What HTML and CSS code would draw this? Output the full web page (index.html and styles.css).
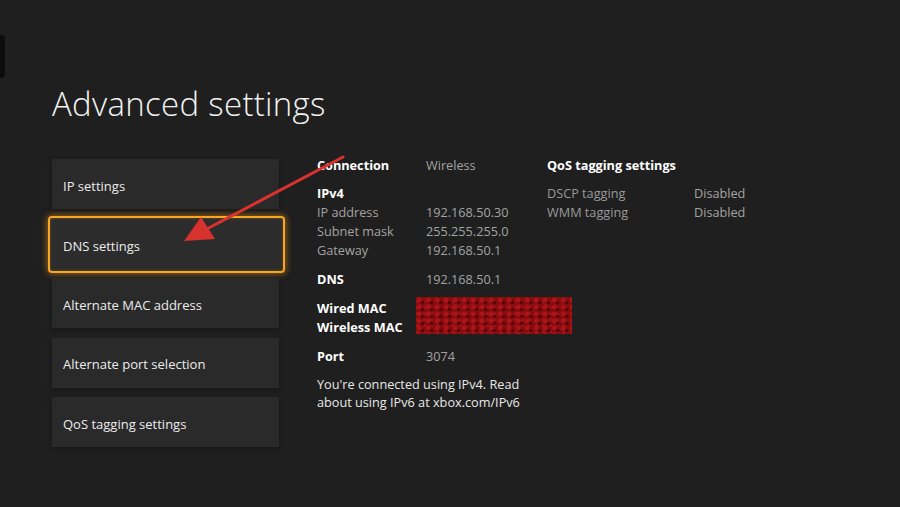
FILE: index.html
```html
<!DOCTYPE html>
<html lang="en">
<head>
<meta charset="utf-8">
<title>Advanced settings</title>
<link rel="stylesheet" href="styles.css">
</head>
<body>
<div class="edge-tab"></div>
<main class="page">
  <h1 class="title">Advanced settings</h1>
  <div class="content">
    <nav class="menu">
      <div class="card">IP settings</div>
      <div class="card focused">DNS settings</div>
      <div class="card">Alternate MAC address</div>
      <div class="card">Alternate port selection</div>
      <div class="card">QoS tagging settings</div>
    </nav>
    <section class="info">
      <div class="col-main">
        <div class="row"><span class="label strong">Connection</span><span class="value">Wireless</span></div>
        <div class="group">
          <div class="row"><span class="label strong">IPv4</span></div>
          <div class="row"><span class="label">IP address</span><span class="value">192.168.50.30</span></div>
          <div class="row"><span class="label">Subnet mask</span><span class="value">255.255.255.0</span></div>
          <div class="row"><span class="label">Gateway</span><span class="value">192.168.50.1</span></div>
        </div>
        <div class="group">
          <div class="row"><span class="label strong">DNS</span><span class="value">192.168.50.1</span></div>
        </div>
        <div class="group mac">
          <div class="mac-labels">
            <div class="row"><span class="label strong">Wired MAC</span></div>
            <div class="row"><span class="label strong">Wireless MAC</span></div>
          </div>
          <div class="redacted"></div>
        </div>
        <div class="group">
          <div class="row"><span class="label strong">Port</span><span class="value">3074</span></div>
        </div>
        <p class="note">You're connected using IPv4. Read about using IPv6 at xbox.com/IPv6</p>
      </div>
      <div class="col-qos">
        <div class="row"><span class="label strong">QoS tagging settings</span></div>
        <div class="group">
          <div class="row"><span class="qlabel">DSCP tagging</span><span class="value">Disabled</span></div>
          <div class="row"><span class="qlabel">WMM tagging</span><span class="value">Disabled</span></div>
        </div>
      </div>
    </section>
  </div>
</main>
<svg class="arrow" width="900" height="507" viewBox="0 0 900 507" aria-hidden="true">
  <line x1="343" y1="157" x2="203" y2="231" stroke="#d8322f" stroke-width="3" stroke-linecap="round"/>
  <polygon points="184,241 201,217 215,239" fill="#d8322f"/>
</svg>
</body>
</html>
```
FILE: styles.css
```css
html, body {
  margin: 0;
  padding: 0;
}
body {
  width: 900px;
  height: 507px;
  background: #1f1f1f;
  color: #e6e6e6;
  font-family: "Open Sans", "Noto Sans", sans-serif;
  overflow: hidden;
  position: relative;
}
.edge-tab {
  position: absolute;
  left: 0;
  top: 35px;
  width: 5px;
  height: 43px;
  background: #0d0d0d;
  border-radius: 0 4px 4px 0;
}
.page {
  padding: 80px 0 0 52px;
}
.title {
  margin: 0;
  font-weight: 300;
  font-size: 33px;
  line-height: 48px;
  color: #f2f2f2;
  letter-spacing: 0.3px;
}
.content {
  display: flex;
  gap: 38px;
  margin-top: 31px;
}
.menu {
  width: 227px;
  flex-shrink: 0;
  display: flex;
  flex-direction: column;
  gap: 9.5px;
}
.card {
  height: 50px;
  background: #2a2a2a;
  display: flex;
  align-items: center;
  padding: 3px 0 0 11px;
  font-size: 13px;
  color: #ececec;
  box-sizing: border-box;
  box-shadow: 0 2px 4px rgba(0,0,0,0.25);
}
.card.focused {
  height: 57px;
  margin: -3px -6px -4px -4px;
  padding-left: 13px;
  background: #2c2c2c;
  border: 2px solid #f5a623;
  border-radius: 4px;
  box-shadow: 0 0 6px 1px rgba(245,150,30,0.55), inset 0 0 3px rgba(245,150,30,0.35);
}
.info {
  display: flex;
  font-size: 12.7px;
  margin-top: -3px;
}
.col-main {
  width: 230px;
  flex-shrink: 0;
}
.col-qos {
  width: 220px;
}
.row {
  display: flex;
  height: 19px;
  line-height: 19px;
  white-space: nowrap;
}
.label {
  width: 109px;
  flex-shrink: 0;
  color: #a3a3a3;
}
.qlabel {
  width: 147px;
  flex-shrink: 0;
  color: #9a9a9a;
}
.label.strong {
  color: #ffffff;
  font-weight: 700;
}
.value {
  color: #a3a3a3;
}
.group {
  margin-top: 9px;
}
.group + .group {
  margin-top: 10px;
}
.mac {
  display: flex;
  align-items: flex-start;
  margin-top: 10px;
}
.mac-labels {
  width: 99px;
  flex-shrink: 0;
}
.redacted {
  width: 156px;
  height: 37px;
  margin-top: -2px;
  flex-shrink: 0;
  background-color: #860c10;
  background-image:
    radial-gradient(circle at 35% 40%, #ad1419 0 2px, transparent 2.6px),
    radial-gradient(circle at 75% 80%, #580508 0 1.4px, transparent 2px),
    radial-gradient(circle at 20% 85%, #9c1216 0 1.6px, transparent 2.2px);
  background-size: 9px 7px, 9px 7px, 7px 6px;
}
.note {
  margin: 9px 0 0;
  line-height: 18px;
  color: #e8e8e8;
  width: 225px;
}
.arrow {
  position: absolute;
  left: 0;
  top: 0;
  pointer-events: none;
}
```
